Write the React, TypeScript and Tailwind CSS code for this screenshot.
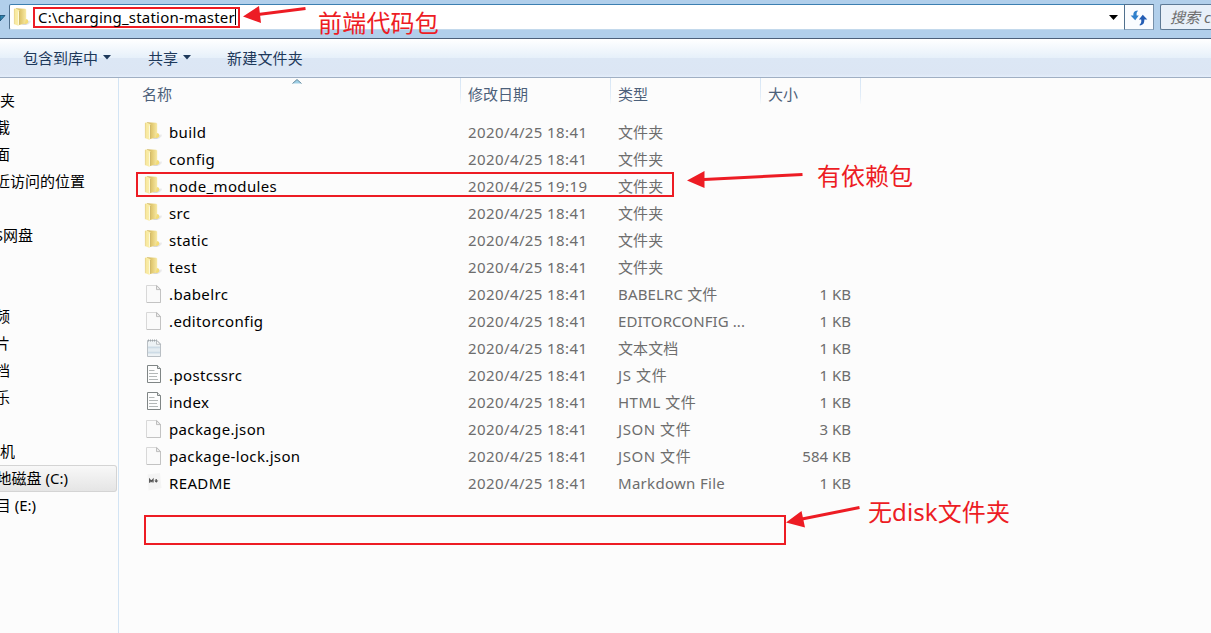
import React from 'react';

type IconKind = 'folder' | 'blank' | 'text' | 'script' | 'markdown';

interface FileRow {
  name: string;
  icon: IconKind;
  date: string;
  type: string;
  size?: string;
  typeSpacing?: string;
}

const D = '2020/4/25 18:41';

const files: FileRow[] = [
  { name: 'build', icon: 'folder', date: D, type: '文件夹' },
  { name: 'config', icon: 'folder', date: D, type: '文件夹' },
  { name: 'node_modules', icon: 'folder', date: '2020/4/25 19:19', type: '文件夹' },
  { name: 'src', icon: 'folder', date: D, type: '文件夹' },
  { name: 'static', icon: 'folder', date: D, type: '文件夹' },
  { name: 'test', icon: 'folder', date: D, type: '文件夹' },
  { name: '.babelrc', icon: 'blank', date: D, type: 'BABELRC 文件', size: '1 KB', typeSpacing: 'tracking-[0.15px]' },
  { name: '.editorconfig', icon: 'blank', date: D, type: 'EDITORCONFIG ...', size: '1 KB', typeSpacing: 'tracking-[0.1px]' },
  { name: '', icon: 'text', date: D, type: '文本文档', size: '1 KB', typeSpacing: 'tracking-[0.1px]' },
  { name: '.postcssrc', icon: 'script', date: D, type: 'JS 文件', size: '1 KB', typeSpacing: 'tracking-[0.6px]' },
  { name: 'index', icon: 'script', date: D, type: 'HTML 文件', size: '1 KB', typeSpacing: 'tracking-[0.5px]' },
  { name: 'package.json', icon: 'blank', date: D, type: 'JSON 文件', size: '3 KB', typeSpacing: 'tracking-[0.55px]' },
  { name: 'package-lock.json', icon: 'blank', date: D, type: 'JSON 文件', size: '584 KB', typeSpacing: 'tracking-[0.55px]' },
  { name: 'README', icon: 'markdown', date: D, type: 'Markdown File', size: '1 KB', typeSpacing: 'tracking-[0.3px]' },
];

const places: { label: string; width: string; selected?: boolean }[] = [
  { label: '收藏夹', width: 'w-[15px]' },
  { label: '下载', width: 'w-[10px]' },
  { label: '桌面', width: 'w-[10px]' },
  { label: '最近访问的位置', width: 'w-[85px]' },
  { label: '', width: 'w-0' },
  { label: 'WPS网盘', width: 'w-[33px]' },
  { label: '', width: 'w-0' },
  { label: '', width: 'w-0' },
  { label: '视频', width: 'w-[10px]' },
  { label: '图片', width: 'w-[10px]' },
  { label: '文档', width: 'w-[10px]' },
  { label: '音乐', width: 'w-[10px]' },
  { label: '', width: 'w-0' },
  { label: '计算机', width: 'w-[15px]' },
  { label: '本地磁盘 (C:)', width: 'w-[68px]', selected: true },
  { label: '项目 (E:)', width: 'w-[36px]' },
];

function Folder({ id, className = '' }: { id: string; className?: string }) {
  return (
    <svg width="20" height="20" viewBox="0 0 20 20" className={`shrink-0 ${className}`}>
      <defs>
        <linearGradient id={id + 'a'} x1="0" x2="1">
          <stop offset="0" stopColor="#f7e79a" />
          <stop offset="1" stopColor="#fbf0b0" />
        </linearGradient>
        <linearGradient id={id + 'b'} x1="0" x2="1">
          <stop offset="0" stopColor="#c9ad55" />
          <stop offset="0.5" stopColor="#e3cb74" />
          <stop offset="1" stopColor="#f8eaa6" />
        </linearGradient>
        <linearGradient id={id + 'c'} x1="0" x2="1">
          <stop offset="0" stopColor="#b5b5ba" stopOpacity="0.9" />
          <stop offset="1" stopColor="#d5d5d8" stopOpacity="0.3" />
        </linearGradient>
      </defs>
      <path d="M9 17.600l5-3.800 4-.3c.6 1.600-1.600 3.700-5 4.400z" fill={`url(#${id}c)`} />
      <path d="M3 1.200l9.300.5.900 1v13.800L6 18z" fill={`url(#${id}b)`} />
      <path d="M13 12l1.900.8.500 2.400-1.600 1.600-2.300.2z" fill="#f3dc78" />
      <path d="M1.100 1.800L2 1.200l4.200 1.800.3 1v14.100l-1.300.7-3.700-1.500z" fill={`url(#${id}a)`} />
      <path d="M1.400 2v15.200" stroke="#e5cf7c" strokeWidth=".7" />
      <path d="M5.500 4.500v13.200" stroke="#fffce6" strokeWidth=".8" />
      <path d="M6.500 4v13.800" stroke="#b89c48" strokeWidth=".5" />
    </svg>
  );
}

function FileIcon({ kind, id }: { kind: IconKind; id: string }) {
  const cls = 'mt-[3px] shrink-0 self-start';
  if (kind === 'folder') return <Folder id={id} className="mt-[3px] self-start" />;
  if (kind === 'markdown')
    return (
      <svg width="20" height="20" viewBox="0 0 20 20" className={cls}>
        <path d="M3.500 2.500l12.500-1.500 1.500 15-13 2.500z" fill="#f4f4f4" />
        <path d="M5.700 10.700V7.500l1.600 1.900 1.700-2v3" fill="none" stroke="#555" strokeWidth="1.300" />
        <path d="M12.200 7v3" stroke="#555" strokeWidth="1.300" />
        <path d="M10.300 8.600h4l-2 2.200z" fill="#555" />
      </svg>
    );
  if (kind === 'script')
    return (
      <svg width="20" height="20" viewBox="0 0 20 20" className={cls}>
        <path d="M3.500 1.500h10l3 3v14h-13z" fill="#fdfdfd" stroke="#7f8585" />
        <path d="M13.500 1.500v3h3" fill="#e3e6e6" stroke="#7f8585" />
        <path d="M5 6.500h5.500M5 9.500h4.500M8 9.500h6M5 12.500h3.500M8 12.500h5M5 15.500h9" stroke="#b3b7b7" />
      </svg>
    );
  if (kind === 'text')
    return (
      <svg width="20" height="20" viewBox="0 0 20 20" className={cls}>
        <path d="M3.500 3.500h9.500l3.500 3.500v12.500h-13z" fill="#edf2f5" stroke="#b9bfc4" />
        <path d="M4 10.500h12M4 15.500h12" stroke="#cddbe6" strokeWidth="2" />
        <path d="M4 13h12" stroke="#dbe6ee" />
        <path d="M4 3.500h9" stroke="#9ea4a8" strokeWidth="2" strokeDasharray="1 1" />
        <path d="M12.500 3.300v4h4z" fill="#f8f8f8" stroke="#a5abaf" strokeWidth=".7" />
      </svg>
    );
  return (
    <svg width="20" height="20" viewBox="0 0 20 20" className={cls}>
      <path d="M2.500 2.500h10.300l3.700 3.700v13.300h-14z" fill="#fafafa" stroke="#d8d8d8" />
      <path d="M3 19.500h13.500V7" fill="none" stroke="#c3c3c3" />
      <path d="M12.500 2.600v4h4z" fill="#eee" stroke="#b0b0b0" strokeWidth=".8" />
    </svg>
  );
}

function Caret() {
  return (
    <svg width="8" height="5" viewBox="0 0 8 5" className="-mt-px">
      <path d="M0 0h8L4 4.600z" fill="#1e395b" />
    </svg>
  );
}

function AddressBar() {
  return (
    <div className="flex h-[38px] shrink-0 items-start bg-[#b1cfeb] pt-1">
      <div className="flex h-[26px] w-[9px] shrink-0 items-start pt-[11px]">
        <svg width="6" height="7" viewBox="0 0 6 7">
          <path d="M0 .5h5L0 6z" fill="#2f86b0" stroke="#174a70" strokeWidth=".8" />
        </svg>
      </div>
      <div className="flex h-[26px] w-[1116px] shrink-0 items-center rounded-l-[2px] border border-t-[#3c7fb1] border-b-[#c3d9ec] border-l-[#50708e] border-r-[#50708e] bg-white pl-[3px] pr-[6px]">
        <Folder id="addr" />
        <div className="flex h-[21px] w-[207px] items-center border-2 border-[#ed1c24] pl-[3px] text-[15px] text-black">
          <span className="whitespace-nowrap tracking-[0.21px]">C:\charging_station-master</span>
          <span className="h-4 w-px bg-black" />
        </div>
        <svg className="ml-auto" width="9" height="5" viewBox="0 0 9 5">
          <path d="M0 0h9L4.500 5z" fill="#000" />
        </svg>
      </div>
      <div className="-ml-px flex h-[26px] w-[30px] shrink-0 items-center justify-center border border-t-[#50708e] border-b-[#8fa9c2] border-l-[#50708e] border-r-[#7690aa] bg-[#fafcff]">
        <svg width="18" height="16" viewBox="0 0 18 16" className="mt-px">
          <path d="M7.500 .4C4.200 .6 3.200 2.500 3.400 5.500H.6l4.600 4.800 3.600-4.800H6.700C6.400 3.200 6.600 2 8 1z" fill="#2f80cc" />
          <path d="M9.800 15.600c3.500-.4 4.700-2.600 4.500-6h3L12.800 4.800 8.900 9.600h2.300c.3 2.500 0 4-1.700 5.200z" fill="#245db4" />
        </svg>
      </div>
      <div className="ml-[6px] flex h-[26px] w-[51px] shrink-0 items-center overflow-hidden rounded-l-[2px] border border-r-0 border-[#5d7995] bg-[#e8f0f9] pl-[9px] text-[15px] text-[#6d6d6d] italic">
        <span className="whitespace-nowrap">搜索 charging</span>
      </div>
    </div>
  );
}

function Toolbar() {
  return (
    <div className="flex h-10 shrink-0 items-center border-t border-b border-t-[#4c607a] border-b-[#a0afc3] bg-[linear-gradient(to_bottom,#ffffff_0,#e6f0fa_19px,#dce7f5_19px,#dce6f4_35px,#e4eefb_38px)] pl-[23px] text-[15px] text-[#1e395b]">
      <div className="flex w-[125px] items-center gap-[5px]">
        <span>包含到库中</span>
        <Caret />
      </div>
      <div className="flex w-[79px] items-center gap-[5px]">
        <span>共享</span>
        <Caret />
      </div>
      <span className="tracking-[0.2px]">新建文件夹</span>
    </div>
  );
}

function ColumnHeader() {
  const sep = 'flex h-[26px] items-center border-l border-transparent [border-image:linear-gradient(to_bottom,#d5e5f5,#e3edf8_70%,#fcfcfc)_1]';
  return (
    <div className="flex h-10 items-start text-[15px] text-[#4c607a]">
      <div className="flex h-8 w-[341px] items-center pl-[23px]">名称</div>
      <div className={`${sep} w-[150px] pl-[7px]`}>
        <span className="pt-[6px]">修改日期</span>
      </div>
      <div className={`${sep} w-[150px] pl-[7px]`}>
        <span className="pt-[6px]">类型</span>
      </div>
      <div className={`${sep} w-[100px] pl-[7px]`}>
        <span className="pt-[6px]">大小</span>
      </div>
      <div className={`${sep} w-px`} />
    </div>
  );
}

function Annotations() {
  return (
    <div className="pointer-events-none absolute inset-0 text-2xl leading-8 whitespace-nowrap text-[#ed1c24]">
      <div className="absolute top-[172px] left-[136px] h-[25px] w-[538px] border-2" />
      <div className="absolute top-[515px] left-[144px] h-[30px] w-[642px] border-2" />
      <svg className="absolute inset-0" width="1211" height="633" viewBox="0 0 1211 633" fill="#ed1c24" stroke="#ed1c24">
        <path d="M305.500 8.500L258 14.500M802.500 174.500L704 179.500M859.500 507.500L802 519" strokeWidth="3" />
        <path d="M243 16.500L259 6l2 17zM687 180.500l17.500-9.500v17zM786 522.500L801.500 511l3.500 16.500z" stroke="none" />
      </svg>
      <span className="absolute top-[7px] left-[318px] tracking-[0.2px]">前端代码包</span>
      <span className="absolute top-[160px] left-[817px]">有依赖包</span>
      <span className="absolute top-[496px] left-[868px] tracking-[0.1px]">无disk文件夹</span>
    </div>
  );
}

export default function App() {
  return (
    <div className="relative flex h-[633px] w-[1211px] flex-col overflow-hidden bg-[#fcfcfc] font-['Noto_Sans','Noto_Sans_CJK_SC',sans-serif] leading-5">
      <AddressBar />
      <Toolbar />
      <div className="flex min-h-0 flex-1">
        <nav className="w-[119px] shrink-0 border-r border-[#d3e4f4] pt-[9px] text-[15px] text-black">
          {places.map((p, i) => (
            <div
              key={i}
              className={
                p.selected
                  ? 'mr-px flex h-[27px] items-center rounded-r-[3px] border border-l-0 border-[#d4d4d4] bg-linear-to-b from-[#f8f8f8] to-[#e5e5e5] pb-[2px]'
                  : 'flex h-[27px] items-center pb-[2px]'
              }
            >
              <div className={`flex justify-end overflow-hidden whitespace-nowrap ${p.width}`}>
                <span>{p.label}</span>
              </div>
            </div>
          ))}
        </nav>
        <main className="relative flex-1">
          <svg className="absolute top-[1px] left-[173px]" width="10" height="5" viewBox="0 0 10 5">
            <path d="M.5 4.500L5 .5l4.500 4z" fill="#9fd0e6" />
            <path d="M.5 4.500L5 .5l4.500 4" fill="none" stroke="#4d7488" strokeWidth=".8" />
          </svg>
          <ColumnHeader />
          {files.map((f, i) => (
            <div key={i} className="flex h-[27px] items-center pl-[25px] text-[15px] whitespace-nowrap text-[#6d6d6d]">
              <FileIcon kind={f.icon} id={`f${i}`} />
              <span className="w-[304px] pl-[5px] tracking-[0.36px] text-black">{f.name}</span>
              <span className="w-[150px] tracking-[0.4px]">{f.date}</span>
              <span className={`w-[133px] ${f.typeSpacing ?? 'tracking-[0.1px]'}`}>{f.type}</span>
              <span className="w-[100px] text-right">{f.size}</span>
            </div>
          ))}
        </main>
      </div>
      <Annotations />
    </div>
  );
}
